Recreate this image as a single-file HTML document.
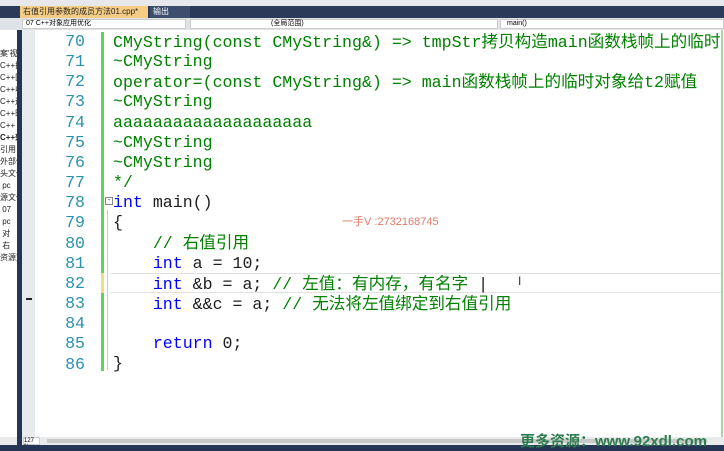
<!DOCTYPE html><html><head><meta charset="utf-8"><style>
*{margin:0;padding:0;box-sizing:border-box}
body{width:724px;height:451px;overflow:hidden;background:#fff;position:relative;font-family:"Liberation Sans","Noto Sans CJK SC",sans-serif}
.a{position:absolute}
.code{position:absolute;left:113px;top:32px;font:16.6px "Liberation Mono","Noto Sans CJK SC",monospace;color:#1e1e1e}
.code div{height:20.15px;line-height:20.15px;white-space:pre;overflow:visible}
.ln{position:absolute;left:40px;width:45px;text-align:right;font:16.6px/20.15px "Liberation Mono",monospace;color:#2b91af;white-space:pre}
.g{color:#008000}.k{color:#0000ff}
.cj{font-family:"Noto Sans CJK SC",sans-serif;line-height:1;vertical-align:baseline}
.side{font-size:8px;line-height:12px;color:#222;white-space:pre}
</style></head><body>
<div class="a" style="left:0;top:0;width:724px;height:6px;background:#e6e8ec"></div>
<div class="a" style="left:0;top:6px;width:724px;height:12px;background:#2b3a58"></div>
<div class="a" style="left:20px;top:6px;width:128px;height:12px;background:#f5cc84;font-size:8px;line-height:12px;color:#222;padding-left:3px">右值引用参数的成员方法01.cpp* &nbsp;⊣ ×</div>
<div class="a" style="left:150px;top:6px;width:40px;height:12px;background:#3c4d6e;font-size:8px;line-height:12px;color:#fff;padding-left:3px">输出</div>
<div class="a" style="left:0;top:18px;width:724px;height:12px;background:#dfe3e8"></div>
<div class="a" style="left:22px;top:19px;width:164px;height:10px;background:#fff;border:1px solid #ccc;font-size:7px;line-height:8px;padding-left:3px">07 C++对象应用优化</div>
<div class="a" style="left:190px;top:19px;width:308px;height:10px;background:#fff;border:1px solid #ccc;font-size:7px;line-height:8px;padding-left:80px">(全局范围)</div>
<div class="a" style="left:500px;top:19px;width:224px;height:10px;background:#fff;border:1px solid #ccc;font-size:7px;line-height:8px;padding-left:6px">main()</div>
<div class="a side" style="left:0;top:30px;width:17px;height:407px;background:#fff;overflow:hidden;padding-top:18px">案'视
C++拢
C++国
C++收
C++运
C++旷
C++ S
<b>C++效</b>
引用
外部依
头文件
 pc
源文件
 07
 pc
 对
 右
资源文</div>
<div class="a" style="left:17px;top:30px;width:5px;height:415px;background:#263555"></div>
<div class="a" style="left:22px;top:30px;width:13px;height:407px;background:#e8ebee"></div>
<div class="a" style="left:26px;top:298px;width:6px;height:2px;background:#222"></div>
<div class="a" style="left:101px;top:32px;width:3px;height:339px;background:#5fd35f"></div>
<div class="a" style="left:101px;top:273px;width:3px;height:20px;background:#f0e07a"></div>
<div class="a" style="left:107px;top:210px;width:1px;height:160px;background:#ccc"></div>
<div class="a" style="left:105px;top:197px;width:8px;height:8px;border:1px solid #888;font-size:7px;line-height:6px;text-align:center;background:#fff">-</div>
<div class="a" style="left:110px;top:273px;width:612px;height:20px;border-top:1px solid #e2e2e2;border-bottom:1px solid #e2e2e2"></div>
<div class="a" style="left:721px;top:30px;width:2px;height:407px;background:#a6d8a6"></div>
<div class="ln" style="top:32px">70
71
72
73
74
75
76
77
78
79
80
81
82
83
84
85
86</div>
<div class="code">
<div class="g">CMyString(const CMyString&amp;) =&gt; tmpStr<span class="cj">拷贝构造</span>main<span class="cj">函数栈帧上的临时</span></div>
<div class="g">~CMyString</div>
<div class="g">operator=(const CMyString&amp;) =&gt; main<span class="cj">函数栈帧上的临时对象给</span>t2<span class="cj">赋值</span></div>
<div class="g">~CMyString</div>
<div class="g">aaaaaaaaaaaaaaaaaaaa</div>
<div class="g">~CMyString</div>
<div class="g">~CMyString</div>
<div class="g">*/</div>
<div><span class="k">int</span> main()</div>
<div>{</div>
<div>    <span class="g">// <span class="cj">右值引用</span></span></div>
<div>    <span class="k">int</span> a = 10;</div>
<div>    <span class="k">int</span> &amp;b = a; <span class="g">// <span class="cj">左值：有内存，有名字</span></span> |</div>
<div>    <span class="k">int</span> &amp;&amp;c = a; <span class="g">// <span class="cj">无法将左值绑定到右值引用</span></span></div>
<div> </div>
<div>    <span class="k">return</span> 0;</div>
<div>}</div>
</div>
<div class="a" style="left:342px;top:213px;font-size:11px;color:#e07a6a;font-family:'Liberation Sans','Noto Sans CJK SC',sans-serif">一手V :2732168745</div>
<div class="a" style="left:518px;top:274px;font-size:12px;color:#333">I</div>
<div class="a" style="left:0;top:437px;width:724px;height:8px;background:#e8eaec"></div>
<div class="a" style="left:17px;top:437px;width:5px;height:8px;background:#263555"></div>
<div class="a" style="left:23px;top:437px;width:17px;height:8px;background:#fff;border:1px solid #ccc;font-size:6px;line-height:6px">127 %</div>
<div class="a" style="left:47px;top:439px;width:660px;height:4px;background:#c8c8c8"></div>
<div class="a" style="left:0;top:445px;width:724px;height:6px;background:#263555"></div>
<div class="a" style="left:520px;top:433px;font-size:15px;font-weight:bold;color:#2e7d4f;line-height:18px;white-space:nowrap">更多资源：www.92xdl.com</div>
</body></html>
